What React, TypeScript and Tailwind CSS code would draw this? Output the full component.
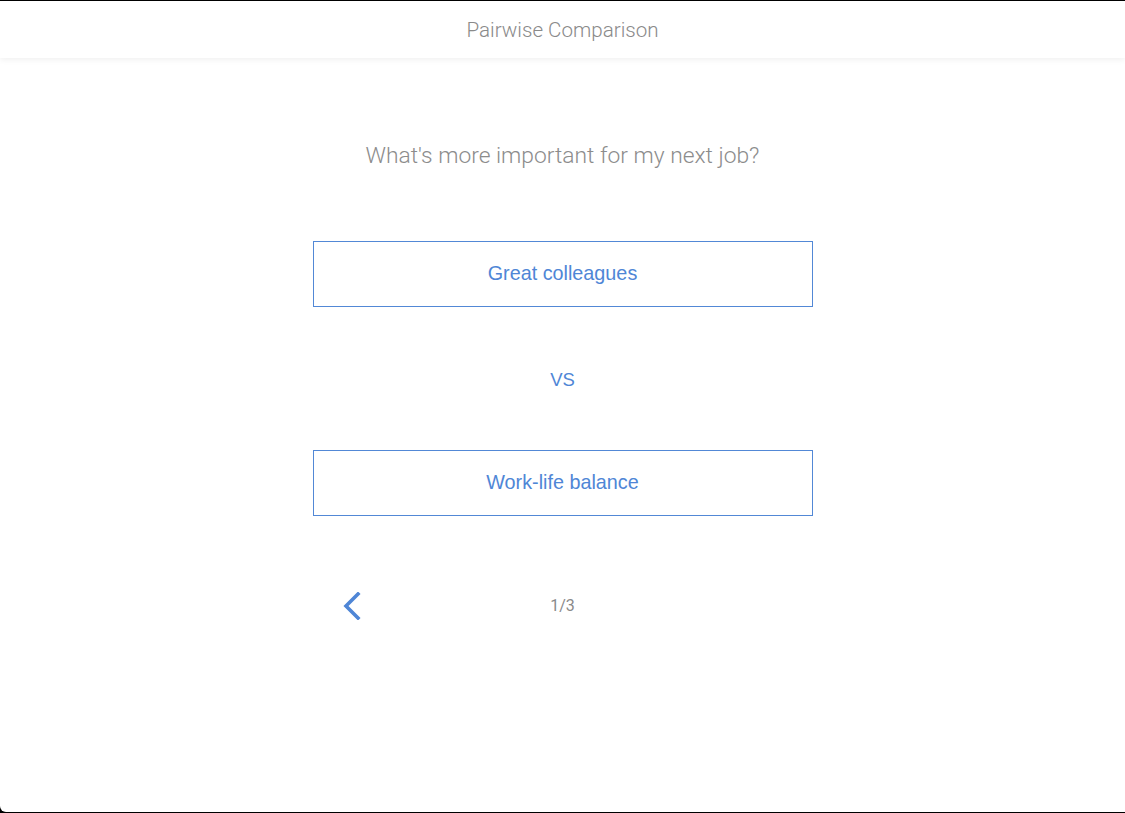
import React from 'react'

const options = ['Great colleagues', 'Work-life balance']

const App = () => {
    return (
        <div className='h-[813px] w-[1125px] bg-black overflow-hidden' style={{ fontFamily: 'Roboto, "Liberation Sans", sans-serif' }}>
            <div className='mt-px h-[811px] bg-white rounded-bl-[6px] flex flex-col'>

                <div className='h-[57px] flex items-center justify-center bg-white shadow-[0_2px_6px_rgba(0,0,0,0.06)]'>
                    <h1 className='text-[20.6px] leading-[28px] font-light text-[#8a8a8a]'>Pairwise Comparison</h1>
                </div>

                <div className='flex flex-col items-center'>
                    <p className='mt-[81px] text-[22.8px] leading-[34px] font-light text-[#8c8c8c]'>What's more important for my next job?</p>

                    <button className='mt-[68px] w-[500px] h-[66px] border border-[#5288d6] text-[19.8px] text-[#4f86d6]' style={{ fontFamily: '"Liberation Sans", Arial, sans-serif' }}>
                        {options[0]}
                    </button>

                    <p className='mt-[59px] text-[18.5px] text-[#4f86d6] leading-[27px]' style={{ fontFamily: '"Liberation Sans", Arial, sans-serif' }}>VS</p>

                    <button className='mt-[57px] w-[500px] h-[66px] border border-[#5288d6] text-[19.8px] text-[#4f86d6]' style={{ fontFamily: '"Liberation Sans", Arial, sans-serif' }}>
                        {options[1]}
                    </button>

                    <div className='mt-[76px] w-[500px] grid grid-cols-[1fr_auto_1fr] items-center'>
                        <button className='pl-[29px] justify-self-start'>
                            <svg width='20' height='28' viewBox='0 0 20 28'>
                                <path d='M16 2 L4 14 L16 26' fill='none' stroke='#4f86d6' strokeWidth='3.6' strokeLinecap='square' />
                            </svg>
                        </button>
                        <span className='text-[16px] text-[#8a8a8a]'>1/3</span>
                        <span />
                    </div>
                </div>
            </div>
        </div>
    )
}

export default App
